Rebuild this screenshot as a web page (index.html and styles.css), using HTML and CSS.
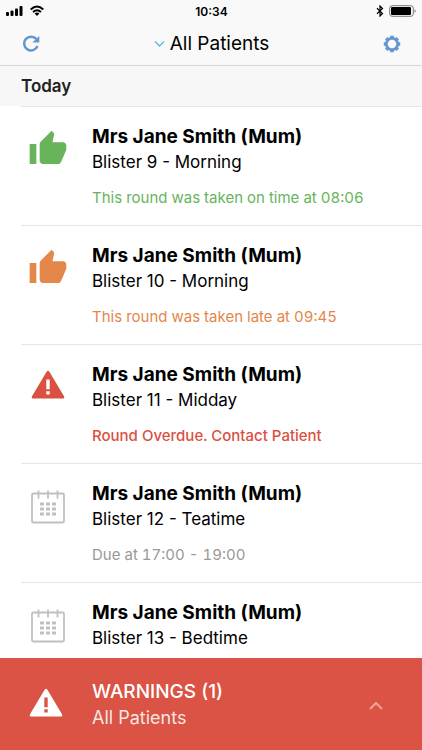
FILE: index.html
```html
<!DOCTYPE html>
<html lang="en">
<head>
<meta charset="utf-8">
<meta name="viewport" content="width=device-width, initial-scale=1">
<title>All Patients</title>
<link rel="stylesheet" href="styles.css">
</head>
<body>
<svg class="symbols" aria-hidden="true">
  <symbol id="thumb" viewBox="0 0 24 24"><path d="M1 21h4V9H1v12zm22-11c0-1.1-.9-2-2-2h-6.310l.95-4.570.03-.32c0-.41-.17-.79-.44-1.060L14.170 1 7.590 7.590C7.220 7.950 7 8.450 7 9v10c0 1.100.9 2 2 2h9c.83 0 1.540-.5 1.840-1.220l3.020-7.050c.09-.23.14-.47.14-.73v-2z"/></symbol>
  <symbol id="warning" viewBox="0 0 40 40"><path fill-rule="evenodd" d="M18.600 4.800Q20 2.600 21.400 4.800L36 29.200Q37 31.600 34.500 31.600H5.500Q3 31.600 4 29.200ZM18.300 12.500V22.200H21.700V12.500ZM18.300 24.200V27.400H21.700V24.200Z"/></symbol>
  <symbol id="calendar" viewBox="0 0 40 40"><rect x="4" y="7.500" width="32" height="29" rx="1.500" fill="none" stroke="currentColor" stroke-width="1.800"/><path fill="none" stroke="currentColor" stroke-width="1.800" d="M10.500 4.500v8M20 4.500v8M29.500 4.500v8"/><path d="M12 16.500h4v3h-4zM18 16.500h4v3h-4zM24 16.500h4v3h-4zM12 21.500h4v3h-4zM18 21.500h4v3h-4zM24 21.500h4v3h-4zM12 26.500h4v3h-4zM18 26.500h4v3h-4zM24 26.500h4v3h-4z"/></symbol>
</svg>

<header class="top">
  <div class="status-bar">
    <div class="signals">
      <svg width="17" height="12" viewBox="0 0 17 12" aria-hidden="true"><rect x="0" y="7" width="3" height="4" rx="1"/><rect x="4.500" y="5.500" width="3" height="5.500" rx="1"/><rect x="9" y="3.500" width="3" height="7.500" rx="1"/><rect x="13.500" y="1" width="3" height="10" rx="1"/></svg>
      <svg width="14" height="12" viewBox="0 0 14 12" fill="none" stroke="#000" stroke-width="1.900" aria-hidden="true"><path d="M.7 4.500Q7-1.300 13.300 4.500M3 7Q7 3.300 11 7"/><path fill="#000" stroke="none" d="M4.600 8.500Q7 6.500 9.400 8.500L7 11Z"/></svg>
    </div>
    <time class="clock">10:34</time>
    <div class="power">
      <svg width="8" height="12" viewBox="0 0 8 12" fill="none" stroke="#000" stroke-width="1.200" aria-hidden="true"><path d="M1 3.300 6.500 8.500 4 11V1L6.500 3.500 1 8.700"/></svg>
      <svg width="28" height="12" viewBox="0 0 28 12" aria-hidden="true"><rect x=".7" y=".7" width="23.600" height="10.600" rx="2.500" fill="none" stroke="#777"/><rect x="2" y="2" width="20" height="8" rx="1"/><path fill="#888" d="M25.500 4Q28 6 25.500 8Z"/></svg>
    </div>
  </div>
  <nav class="nav">
    <button class="icon-button" type="button" aria-label="Refresh">
      <svg width="18" height="18" viewBox="0 0 18 18" aria-hidden="true"><path fill="none" stroke="currentColor" stroke-width="2.500" d="M14.500 4.300A6.900 6.900 0 1 0 15.500 11"/><path d="M17.300 1V7.500H10.300Z"/></svg>
    </button>
    <button class="title" type="button">
      <svg width="11" height="8" viewBox="0 0 11 8" fill="none" stroke="#62bde4" stroke-width="1.500" aria-hidden="true"><path d="M1 1.500 5.500 6 10 1.500"/></svg>
      All Patients
    </button>
    <button class="icon-button" type="button" aria-label="Settings">
      <svg width="18" height="18" viewBox="0 0 18 18" aria-hidden="true"><circle cx="9" cy="9" r="5.700" fill="none" stroke="currentColor" stroke-width="2.800"/><path fill="none" stroke="currentColor" stroke-width="3.600" d="M9 .8v2M9 15.200v2M.8 9h2M15.200 9h2M3.200 3.200l1.400 1.400M13.400 13.400l1.400 1.400M3.200 14.800l1.400-1.400M13.400 4.600l1.400-1.400"/></svg>
    </button>
  </nav>
</header>

<main class="content">
  <h2 class="day">Today</h2>
  <ul class="rounds">
    <li class="round taken">
      <svg class="mark" aria-hidden="true"><use href="#thumb"/></svg>
      <div class="details"><h3>Mrs Jane Smith (Mum)</h3><p>Blister 9 - Morning</p><p class="state">This round was taken on time at 08:06</p></div>
    </li>
    <li class="round late">
      <svg class="mark" aria-hidden="true"><use href="#thumb"/></svg>
      <div class="details"><h3>Mrs Jane Smith (Mum)</h3><p>Blister 10 - Morning</p><p class="state">This round was taken late at 09:45</p></div>
    </li>
    <li class="round overdue">
      <svg class="mark" aria-hidden="true"><use href="#warning"/></svg>
      <div class="details"><h3>Mrs Jane Smith (Mum)</h3><p>Blister 11 - Midday</p><p class="state">Round Overdue. Contact Patient</p></div>
    </li>
    <li class="round due">
      <svg class="mark" aria-hidden="true"><use href="#calendar"/></svg>
      <div class="details"><h3>Mrs Jane Smith (Mum)</h3><p>Blister 12 - Teatime</p><p class="state">Due at 17:00 - 19:00</p></div>
    </li>
    <li class="round due">
      <svg class="mark" aria-hidden="true"><use href="#calendar"/></svg>
      <div class="details"><h3>Mrs Jane Smith (Mum)</h3><p>Blister 13 - Bedtime</p></div>
    </li>
  </ul>
</main>

<button class="warnings" type="button">
  <svg class="mark" aria-hidden="true"><use href="#warning"/></svg>
  <span class="warning-text"><span class="warning-title">WARNINGS (1)</span><span class="warning-scope">All Patients</span></span>
  <svg class="expand" width="14" height="9" viewBox="0 0 14 9" fill="none" stroke="currentColor" stroke-width="2" aria-hidden="true"><path d="M1 8 7 2 13 8"/></svg>
</button>
</body>
</html>
```
FILE: styles.css
```css
* {
  box-sizing: border-box;
}

body {
  display: flex;
  flex-direction: column;
  height: 100vh;
  margin: 0;
  overflow: hidden;
  background: #fff;
  color: #000;
  font-family: Inter, "Liberation Sans", sans-serif;
}

h2, h3, p, ul {
  margin: 0;
  padding: 0;
}

button {
  border: 0;
  padding: 0;
  background: none;
  color: inherit;
  font: inherit;
  cursor: pointer;
}

svg {
  display: block;
  flex: none;
}

.symbols {
  position: absolute;
  width: 0;
  height: 0;
}

.top {
  flex: none;
  border-bottom: 1px solid #d6d6d6;
  background: #f9f9f9;
}

.status-bar {
  display: grid;
  grid-template-columns: 1fr auto 1fr;
  align-items: center;
  height: 22px;
  padding: 0 5px 0 6px;
}

.signals, .power {
  display: flex;
  align-items: center;
  gap: 7px;
}

.power {
  justify-content: flex-end;
  gap: 5px;
}

.clock {
  font-size: 12px;
  font-weight: 600;
}

.nav {
  display: flex;
  align-items: center;
  justify-content: space-between;
  height: 43px;
  padding: 0 21px 0 22px;
}

.icon-button {
  color: #6497cd;
}

.icon-button svg {
  fill: currentColor;
}

.title {
  display: flex;
  align-items: center;
  gap: 5px;
  font-size: 19px;
}

.content {
  flex: 1;
  min-height: 0;
  overflow: hidden;
}

.day {
  padding-left: 21px;
  background: #f7f7f7;
  color: #222;
  font-size: 17px;
  font-weight: 600;
  line-height: 40px;
}

.rounds {
  list-style: none;
}

.round {
  display: flex;
  gap: 24px;
  height: 119px;
  margin-left: 21px;
  padding: 17px 0 0 7px;
  border-top: 1px solid #e6e6e6;
}

.mark {
  width: 40px;
  height: 40px;
  margin-top: 5px;
  fill: currentColor;
}

.details {
  font-size: 17px;
  line-height: 24px;
}

.details h3 {
  font-size: 19px;
  font-weight: 700;
  line-height: 26px;
}

.details .state {
  margin-top: 12px;
  font-size: 15px;
  font-variant-numeric: tabular-nums;
}

.taken .mark, .taken .state {
  color: #68b45b;
}

.late .mark, .late .state {
  color: #e3874b;
}

.overdue .mark, .overdue .state {
  color: #da5043;
}

.overdue .state {
  font-weight: 500;
}

.due .mark {
  color: #c0c0c2;
}

.due .state {
  color: #999;
}

.warnings {
  display: flex;
  flex: none;
  align-items: center;
  gap: 26px;
  height: 92px;
  padding: 2px 39px 0 26px;
  background: #da5344;
  color: #fff;
  text-align: left;
}

.warnings .mark {
  margin: 0;
}

.warning-text {
  display: flex;
  flex: 1;
  flex-direction: column;
  line-height: 26px;
}

.warning-title {
  font-size: 19px;
  font-weight: 500;
}

.warning-scope {
  font-size: 18px;
  opacity: 0.85;
}

.expand {
  color: #eea49c;
}
```
